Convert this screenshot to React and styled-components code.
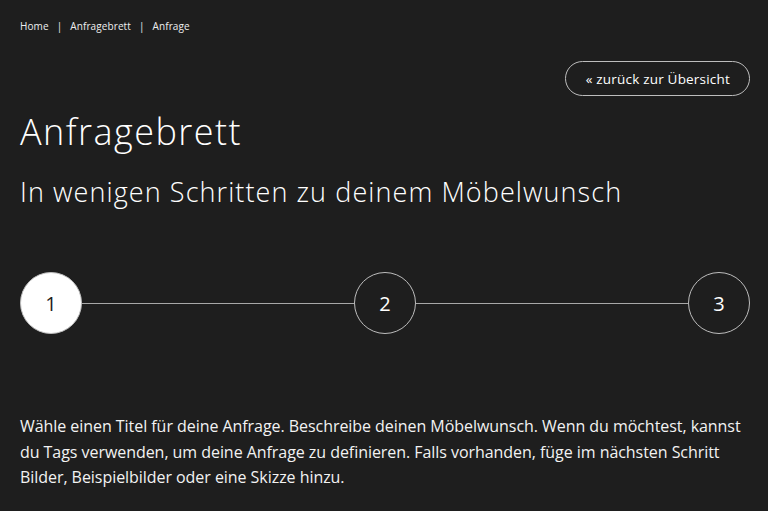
import React from "react";
import styled, { createGlobalStyle } from "styled-components";

const Global = createGlobalStyle`
  html, body { margin: 0; padding: 0; background: #1e1e1e; }
  body { font-family: "Open Sans", "Noto Sans", sans-serif; color: #fff; }
  * { box-sizing: border-box; }
`;

const Page = styled.div`
  width: 768px;
  min-height: 511px;
  background: #1e1e1e;
  padding: 18px 18px 0 20px;
  display: flex;
  flex-direction: column;
`;

const Breadcrumb = styled.nav`
  display: flex;
  align-items: center;
  gap: 8px;
  font-size: 10px;
  line-height: 16px;
  color: #eee;
  letter-spacing: 0.1px;
`;

const Crumb = styled.a`
  color: #eee;
  text-decoration: none;
`;

const Sep = styled.span`
  color: #eee;
`;

const TopRow = styled.div`
  display: flex;
  justify-content: flex-end;
  margin-top: 27px;
`;

const BackButton = styled.button`
  height: 35px;
  padding: 0 19px 0 20px;
  border-radius: 18px;
  border: 1px solid #bdbdbd;
  background: transparent;
  color: #fff;
  font-family: inherit;
  font-size: 13.5px;
  letter-spacing: 0.2px;
  display: flex;
  align-items: center;
  gap: 3px;
  cursor: pointer;
`;

const Title = styled.h1`
  margin: 14px 0 0;
  font-size: 36px;
  line-height: 44px;
  font-weight: 300;
  letter-spacing: 1.45px;
`;

const Subtitle = styled.h2`
  margin: 20px 0 0;
  font-size: 27px;
  line-height: 36px;
  font-weight: 300;
  letter-spacing: 1.08px;
`;

const Stepper = styled.div`
  display: flex;
  align-items: center;
  margin-top: 62px;
  width: 730px;
`;

const Step = styled.div`
  width: 62px;
  height: 62px;
  flex: none;
  border-radius: 50%;
  border: 1px solid #bdbdbd;
  background: ${(p) => (p.$active ? "#fff" : "transparent")};
  color: ${(p) => (p.$active ? "#1e1e1e" : "#fff")};
  display: flex;
  align-items: center;
  justify-content: center;
  font-size: 20px;
  font-weight: 400;
`;

const Line = styled.div`
  flex: 1;
  height: 1px;
  background: #a8a8a8;
`;

const Text = styled.p`
  margin: 80px 0 0;
  width: 730px;
  font-size: 16px;
  line-height: 25.7px;
  color: #f2f2f2;
  letter-spacing: -0.05px;
`;

export default function App() {
  return (
    <>
      <Global />
      <Page>
        <Breadcrumb>
          <Crumb href="#">Home</Crumb>
          <Sep>|</Sep>
          <Crumb href="#">Anfragebrett</Crumb>
          <Sep>|</Sep>
          <Crumb href="#">Anfrage</Crumb>
        </Breadcrumb>
        <TopRow>
          <BackButton>« zurück zur Übersicht</BackButton>
        </TopRow>
        <Title>Anfragebrett</Title>
        <Subtitle>In wenigen Schritten zu deinem Möbelwunsch</Subtitle>
        <Stepper>
          <Step $active>1</Step>
          <Line />
          <Step>2</Step>
          <Line />
          <Step>3</Step>
        </Stepper>
        <Text>
          Wähle einen Titel für deine Anfrage. Beschreibe deinen Möbelwunsch. Wenn du möchtest, kannst
          du Tags verwenden, um deine Anfrage zu definieren. Falls vorhanden, füge im nächsten Schritt
          Bilder, Beispielbilder oder eine Skizze hinzu.
        </Text>
      </Page>
    </>
  );
}
